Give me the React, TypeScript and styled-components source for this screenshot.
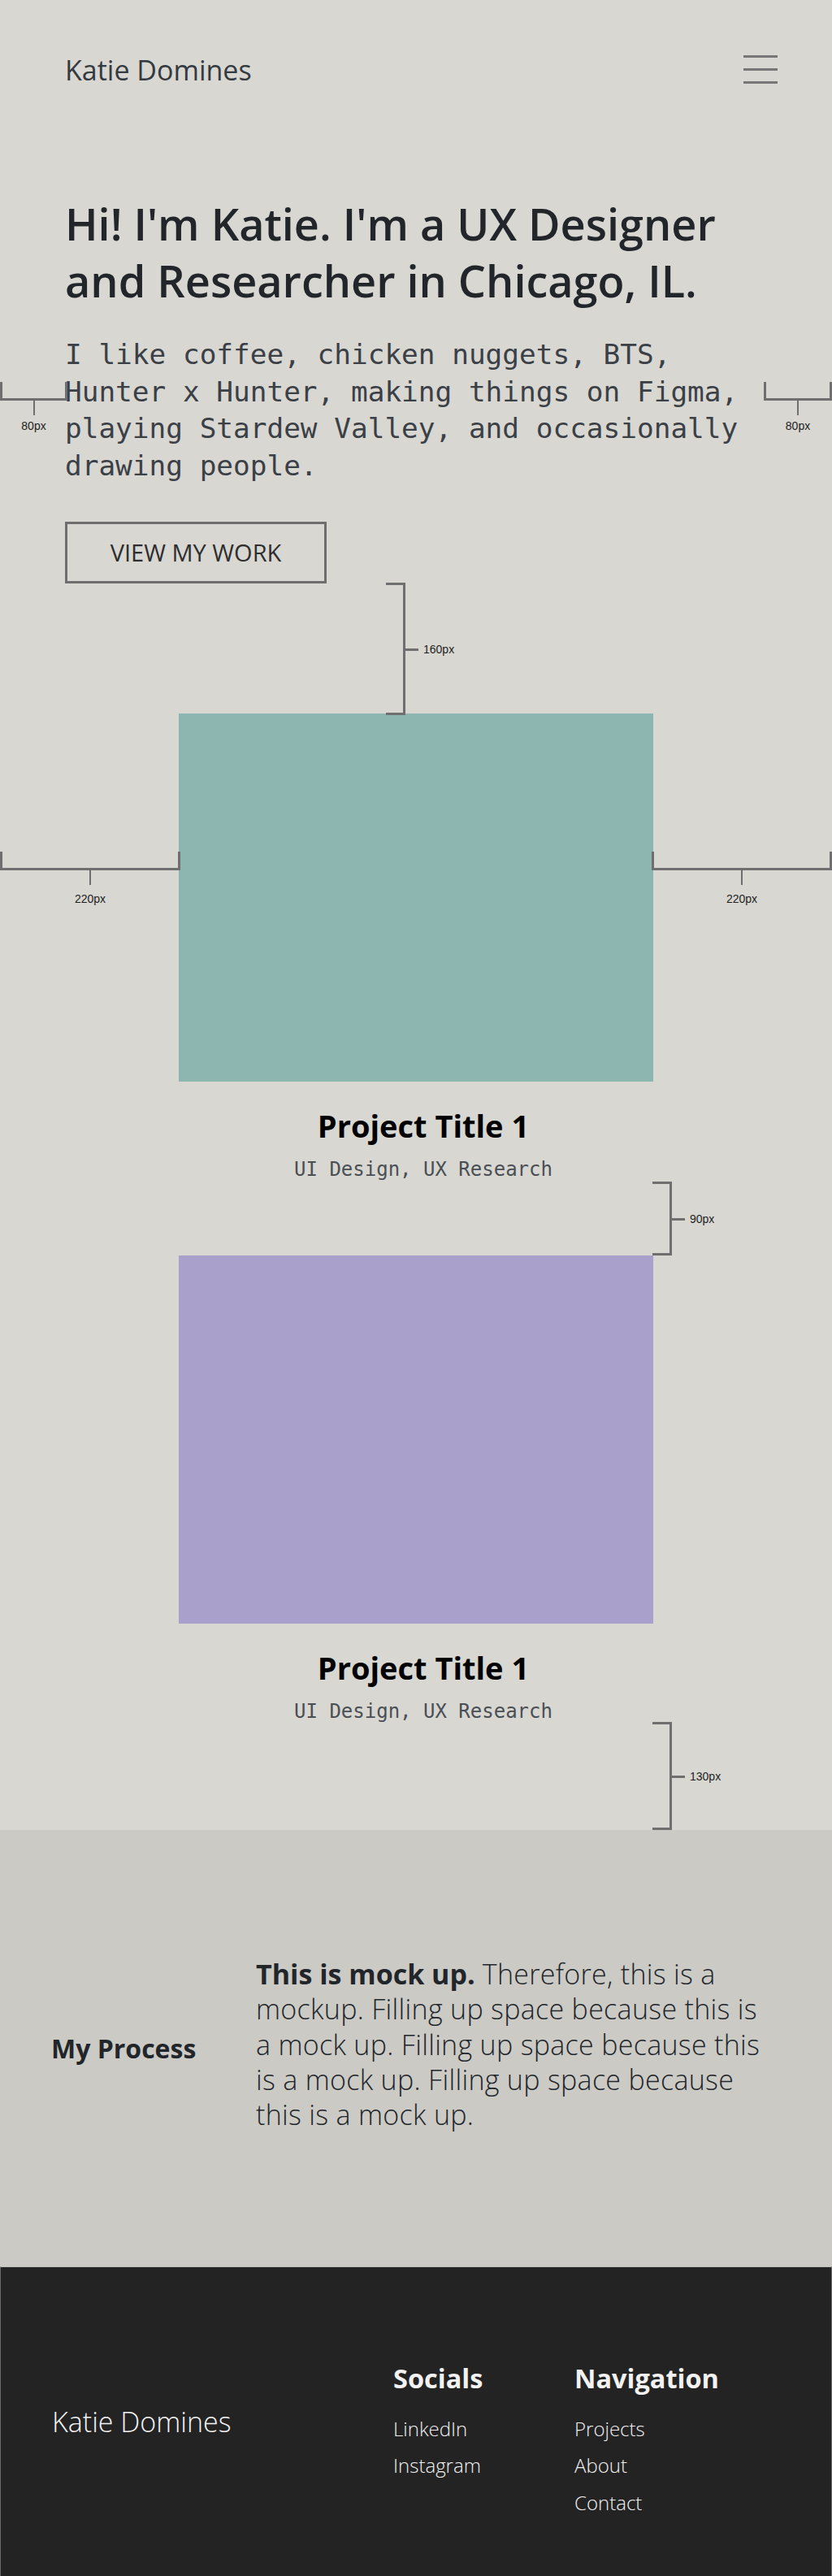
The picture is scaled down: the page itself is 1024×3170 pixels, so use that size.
import React from 'react';
import styled, { createGlobalStyle } from 'styled-components';

const GlobalStyle = createGlobalStyle`
  * { box-sizing: border-box; }
  body {
    margin: 0;
    background: #d8d7d2;
    font-family: 'Open Sans', 'Liberation Sans', sans-serif;
  }
`;

const sans = `'Open Sans', 'Liberation Sans', sans-serif`;
const mono = `'DejaVu Sans Mono', 'Liberation Mono', monospace`;

const Page = styled.div`
  position: relative;
  width: 1024px;
  background: #d8d7d2;
  overflow: hidden;
`;

const Header = styled.header`
  height: 172px;
  padding: 0 67px 0 80px;
  display: flex;
  align-items: center;
  justify-content: space-between;
`;

const Brand = styled.div`
  font-family: ${sans};
  font-size: 34px;
  font-weight: 400;
  color: #343a40;
`;

const Menu = styled.div`
  width: 42px;
  display: flex;
  flex-direction: column;
  gap: 13px;
  margin-top: -2px;
  span {
    display: block;
    height: 3px;
    background: #767676;
  }
`;

const Hero = styled.section`
  padding: 68px 80px 0 80px;
`;

const Headline = styled.h1`
  margin: 0;
  font-family: ${sans};
  font-size: 54px;
  line-height: 70px;
  font-weight: 600;
  color: #22262b;
`;

const Intro = styled.p`
  margin: 34px 0 0;
  font-family: ${mono};
  font-size: 34.4px;
  line-height: 45.7px;
  color: #3b4046;
`;

const OutlineButton = styled.button`
  margin-top: 45px;
  width: 322px;
  height: 76px;
  border: 3px solid #6e6e6e;
  background: transparent;
  font-family: ${sans};
  font-size: 29px;
  font-weight: 400;
  color: #2e2e2e;
  padding: 0;
`;

const Projects = styled.section`
  padding-top: 160px;
  display: flex;
  flex-direction: column;
  align-items: center;
`;

const ProjectCard = styled.article<{ $gap: number }>`
  width: 584px;
  margin-bottom: ${(p) => p.$gap}px;
`;

const Thumb = styled.div<{ $color: string }>`
  height: 453px;
  background: ${(p) => p.$color};
`;

const Caption = styled.div`
  padding-left: 18px;
  text-align: center;
`;

const ProjectTitle = styled.h2`
  margin: 30px 0 0;
  font-family: ${sans};
  font-size: 38px;
  line-height: 48px;
  font-weight: 700;
  color: #000;
`;

const Tags = styled.div`
  margin-top: 14px;
  font-family: ${mono};
  font-size: 24px;
  line-height: 32px;
  color: #4a4f55;
`;

const Process = styled.section`
  background: #cbcac5;
  height: 537px;
  padding: 0 79px 0 63px;
  display: flex;
  align-items: center;
`;

const ProcessLabel = styled.h3`
  margin: 0;
  flex: 0 0 252px;
  font-family: ${sans};
  font-size: 32px;
  font-weight: 700;
  color: #22262b;
`;

const ProcessText = styled.p`
  margin: 0 0 8px;
  flex: 0 0 632px;
  font-family: ${sans};
  font-size: 34px;
  line-height: 43.4px;
  font-weight: 300;
  letter-spacing: 0.3px;
  color: #22262b;
  b { font-weight: 700; letter-spacing: 0; }
`;

const Footer = styled.footer`
  background: #232323;
  border: 1px solid #6b6b6b;
  border-top-color: #bdbdb9;
  height: 383px;
  padding: 116px 0 0 63px;
  display: flex;
  align-items: flex-start;
`;

const FooterName = styled.div`
  flex: 0 0 420px;
  margin-top: 54px;
  font-family: ${sans};
  font-size: 34px;
  line-height: 40px;
  font-weight: 300;
  color: #f2f2f2;
`;

const FooterCol = styled.div<{ $width: number }>`
  width: ${(p) => p.$width}px;
  display: flex;
  flex-direction: column;
`;

const FooterHeading = styled.h4`
  margin: 0 0 19px;
  font-family: ${sans};
  font-size: 32.5px;
  line-height: 41px;
  font-weight: 700;
  color: #f2f2f2;
`;

const FooterLink = styled.a`
  font-family: ${sans};
  font-size: 24px;
  line-height: 45.5px;
  font-weight: 300;
  color: #f0f0f0;
  text-decoration: none;
`;

/* design annotations laid over the mockup */
const HMeasure = styled.div<{ $x: number; $y: number; $w: number }>`
  position: absolute;
  left: ${(p) => p.$x}px;
  top: ${(p) => p.$y}px;
  width: ${(p) => p.$w}px;
  height: 23px;
  border: 3px solid #6f6f6f;
  border-top: none;
  &::after {
    content: '';
    position: absolute;
    left: 50%;
    top: 100%;
    width: 2px;
    height: 21px;
    margin-left: -1px;
    background: #6f6f6f;
  }
`;

const HLabel = styled.span<{ $gap: number }>`
  position: absolute;
  left: 50%;
  top: 100%;
  margin-top: ${(p) => p.$gap}px;
  transform: translateX(-50%);
`;

const VMeasure = styled.div<{ $x: number; $y: number; $h: number }>`
  position: absolute;
  left: ${(p) => p.$x}px;
  top: ${(p) => p.$y}px;
  width: 24px;
  height: ${(p) => p.$h}px;
  border: 3px solid #6f6f6f;
  border-left: none;
  &::after {
    content: '';
    position: absolute;
    left: 100%;
    top: 50%;
    width: 19px;
    height: 3px;
    margin-top: -1px;
    background: #6f6f6f;
  }
`;

const VLabel = styled.span`
  position: absolute;
  left: 100%;
  top: 50%;
  margin-left: 25px;
  transform: translateY(-50%);
`;

const MeasureText = styled.div`
  font-family: 'Liberation Sans', Arial, sans-serif;
  font-size: 14px;
  color: #1e1e1e;
  white-space: nowrap;
`;

const hMeasures = [
  { x: 0, y: 470, w: 83, gap: 26, label: '80px' },
  { x: 940, y: 470, w: 84, gap: 26, label: '80px' },
  { x: 0, y: 1048, w: 222, gap: 30, label: '220px' },
  { x: 802, y: 1048, w: 222, gap: 30, label: '220px' },
];

const vMeasures = [
  { x: 475, y: 717, h: 163, label: '160px' },
  { x: 803, y: 1454, h: 91, label: '90px' },
  { x: 803, y: 2119, h: 133, label: '130px' },
];

const projects = [
  { color: '#8db6b1', gap: 90 },
  { color: '#a9a1cc', gap: 130 },
];

export default function App() {
  return (
    <Page>
      <GlobalStyle />
      <Header>
        <Brand>Katie Domines</Brand>
        <Menu>
          <span />
          <span />
          <span />
        </Menu>
      </Header>

      <Hero>
        <Headline>
          Hi! I'm Katie. I'm a UX Designer and Researcher in Chicago, IL.
        </Headline>
        <Intro>
          I like coffee, chicken nuggets, BTS, Hunter x Hunter, making things on Figma, playing
          Stardew Valley, and occasionally drawing people.
        </Intro>
        <OutlineButton>VIEW MY WORK</OutlineButton>
      </Hero>

      <Projects>
        {projects.map((p, i) => (
          <ProjectCard key={i} $gap={p.gap}>
            <Thumb $color={p.color} />
            <Caption>
              <ProjectTitle>Project Title 1</ProjectTitle>
              <Tags>UI Design, UX Research</Tags>
            </Caption>
          </ProjectCard>
        ))}
      </Projects>

      <Process>
        <ProcessLabel>My Process</ProcessLabel>
        <ProcessText>
          <b>This is mock up.</b> Therefore, this is a mockup. Filling up space because this is a
          mock up. Filling up space because this is a mock up. Filling up space because this is a
          mock up.
        </ProcessText>
      </Process>

      <Footer>
        <FooterName>Katie Domines</FooterName>
        <FooterCol $width={223}>
          <FooterHeading>Socials</FooterHeading>
          <FooterLink href="#">LinkedIn</FooterLink>
          <FooterLink href="#">Instagram</FooterLink>
        </FooterCol>
        <FooterCol $width={200}>
          <FooterHeading>Navigation</FooterHeading>
          <FooterLink href="#">Projects</FooterLink>
          <FooterLink href="#">About</FooterLink>
          <FooterLink href="#">Contact</FooterLink>
        </FooterCol>
      </Footer>

      {hMeasures.map((m, i) => (
        <HMeasure key={'h' + i} $x={m.x} $y={m.y} $w={m.w}>
          <HLabel $gap={m.gap}>
            <MeasureText>{m.label}</MeasureText>
          </HLabel>
        </HMeasure>
      ))}
      {vMeasures.map((m, i) => (
        <VMeasure key={'v' + i} $x={m.x} $y={m.y} $h={m.h}>
          <VLabel>
            <MeasureText>{m.label}</MeasureText>
          </VLabel>
        </VMeasure>
      ))}
    </Page>
  );
}
